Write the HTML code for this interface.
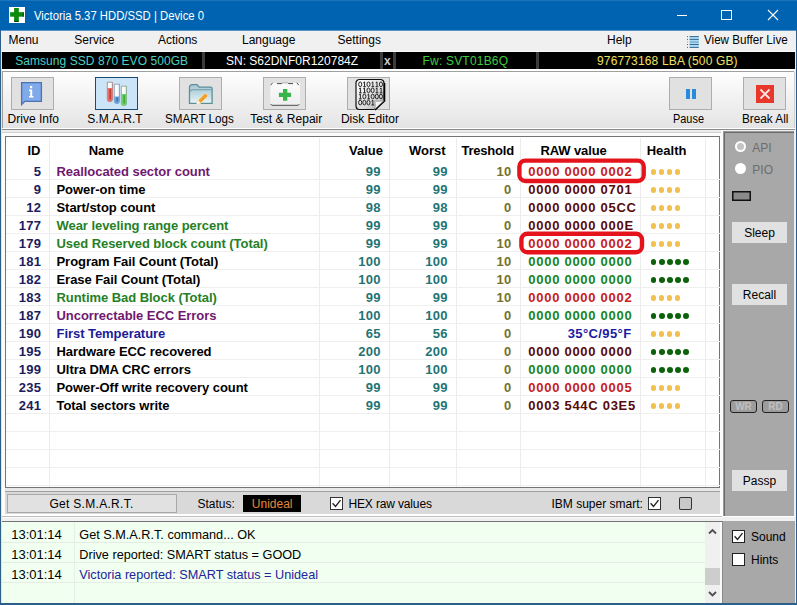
<!DOCTYPE html>
<html><head><meta charset="utf-8"><style>
html,body{margin:0;padding:0;width:797px;height:605px;overflow:hidden;background:#f0f0f0}
#w{position:relative;width:797px;height:605px;overflow:hidden;font-family:"Liberation Sans", sans-serif}
.r{position:absolute}
.t{position:absolute;white-space:pre;font-family:"Liberation Sans", sans-serif}
</style></head><body><div id="w">
<div class="r" style="left:0px;top:0px;width:797px;height:605px;background:#f0f0f0"></div>
<div class="r" style="left:0px;top:0px;width:797px;height:30px;background:#0063b1"></div>
<div class="r" style="left:0px;top:0px;width:797px;height:1px;background:#1a73bd"></div>
<div class="r" style="left:9px;top:7px;width:16px;height:16px;background:#ffffff"></div>
<svg class="r" style="left:9px;top:7px" width="16" height="16" viewBox="0 0 16 16"><g fill="#0b8a0b"><rect x="5.1" y="1" width="4.7" height="13.8"/><rect x="1.1" y="5.2" width="13.6" height="4.5"/></g><rect x="13.7" y="5.2" width="1" height="4.5" fill="#053505"/><rect x="5.1" y="13.8" width="4.7" height="1" fill="#053505"/></svg>
<div class="t" style="left:33.5px;top:9.84px;font-size:12px;line-height:12px;color:#ffffff;font-weight:normal;transform:scaleX(0.943);transform-origin:0 0;">Victoria 5.37 HDD/SSD | Device 0</div>
<svg class="r" style="left:660px;top:0" width="137" height="30" viewBox="0 0 137 30"><path d="M17 15.5h10" stroke="#fff" stroke-width="1"/><rect x="61.5" y="10.5" width="10" height="9" fill="none" stroke="#fff" stroke-width="1"/><path d="M108 10L118 20M118 10L108 20" stroke="#fff" stroke-width="1.1"/></svg>
<div class="r" style="left:1px;top:30px;width:795px;height:22px;background:#f0f0f0"></div>
<div class="r" style="left:1px;top:51px;width:795px;height:1px;background:#fbfbfb"></div>
<div class="r" style="left:0px;top:30px;width:797px;height:1px;background:#5a93c8"></div>
<div class="t" style="left:8.5px;top:33.84px;font-size:12px;line-height:12px;color:#000;font-weight:normal;">Menu</div>
<div class="t" style="left:74.3px;top:33.84px;font-size:12px;line-height:12px;color:#000;font-weight:normal;">Service</div>
<div class="t" style="left:158px;top:33.84px;font-size:12px;line-height:12px;color:#000;font-weight:normal;">Actions</div>
<div class="t" style="left:242px;top:33.84px;font-size:12px;line-height:12px;color:#000;font-weight:normal;">Language</div>
<div class="t" style="left:337.6px;top:33.84px;font-size:12px;line-height:12px;color:#000;font-weight:normal;">Settings</div>
<div class="t" style="left:607px;top:33.84px;font-size:12px;line-height:12px;color:#000;font-weight:normal;">Help</div>
<svg class="r" style="left:680px;top:30px" width="24" height="22" viewBox="0 0 24 22"><rect x="9.6" y="6.3" width="9.2" height="11.5" fill="#a8dcf4"/><g fill="#3a6a90"><rect x="9.6" y="6.1" width="9.2" height="1"/><rect x="9.6" y="8.9" width="9.2" height="1"/><rect x="9.6" y="11.5" width="9.2" height="1" fill="#6a9ab8"/><rect x="9.6" y="14" width="9.2" height="1"/><rect x="9.6" y="16.9" width="9.2" height="1"/><rect x="7" y="6.1" width="1" height="1"/><rect x="7" y="8.9" width="1" height="1"/><rect x="7" y="11.5" width="1" height="1" fill="#8aaac0"/><rect x="7" y="14" width="1" height="1"/><rect x="7" y="16.9" width="1" height="1"/></g></svg>
<div class="t" style="left:704.3px;top:33.84px;font-size:12px;line-height:12px;color:#000;font-weight:normal;transform:scaleX(0.97);transform-origin:0 0;">View Buffer Live</div>
<div class="r" style="left:2px;top:52px;width:793px;height:17px;background:#000"></div>
<div class="r" style="left:202px;top:52px;width:3px;height:17px;background:#3c3c3c"></div>
<div class="r" style="left:380px;top:52px;width:3px;height:17px;background:#3c3c3c"></div>
<div class="r" style="left:393px;top:52px;width:3px;height:17px;background:#3c3c3c"></div>
<div class="r" style="left:536px;top:52px;width:3px;height:17px;background:#3c3c3c"></div>
<div class="t" style="left:15.2px;top:54.84px;font-size:12px;line-height:12px;color:#4fd0c4;font-weight:normal;letter-spacing:0.06px;">Samsung SSD 870 EVO 500GB</div>
<div class="t" style="left:226px;top:54.84px;font-size:12px;line-height:12px;color:#ffffff;font-weight:normal;">SN: S62DNF0R120784Z</div>
<div class="t" style="left:384px;top:54.84px;font-size:12px;line-height:12px;color:#c8c8c8;font-weight:bold;">x</div>
<div class="t" style="left:422.5px;top:54.84px;font-size:12px;line-height:12px;color:#3fcc3f;font-weight:normal;letter-spacing:0.2px;">Fw: SVT01B6Q</div>
<div class="t" style="left:597px;top:54.84px;font-size:12px;line-height:12px;color:#f0e060;font-weight:normal;letter-spacing:0.15px;">976773168 LBA (500 GB)</div>
<div class="r" style="left:2px;top:69px;width:793px;height:2px;background:#ffffff"></div>
<div class="r" style="left:2px;top:71px;width:792px;height:1px;background:#a0a0a0"></div>
<div class="r" style="left:2px;top:72px;width:792px;height:56px;background:linear-gradient(#fefefe,#e4e4e4)"></div>
<div class="r" style="left:2px;top:72px;width:1px;height:56px;background:#a0a0a0"></div>
<div class="r" style="left:794px;top:72px;width:1px;height:56px;background:#d0d0d0"></div>
<div class="r" style="left:2px;top:128px;width:793px;height:1px;background:#ffffff"></div>
<div class="r" style="left:2px;top:129px;width:793px;height:1px;background:#8c8c8c"></div>
<div class="r" style="left:11px;top:77px;width:43px;height:33px;background:#e1e1e1;box-shadow:inset 0 0 0 1px #adadad;"></div>
<div class="r" style="left:179px;top:77px;width:43px;height:33px;background:#e1e1e1;box-shadow:inset 0 0 0 1px #adadad;"></div>
<div class="r" style="left:263px;top:77px;width:43px;height:33px;background:#e1e1e1;box-shadow:inset 0 0 0 1px #adadad;"></div>
<div class="r" style="left:347px;top:77px;width:43px;height:33px;background:#e1e1e1;box-shadow:inset 0 0 0 1px #adadad;"></div>
<div class="r" style="left:669px;top:77px;width:43px;height:33px;background:#e1e1e1;box-shadow:inset 0 0 0 1px #adadad;"></div>
<div class="r" style="left:743px;top:77px;width:43px;height:33px;background:#e1e1e1;box-shadow:inset 0 0 0 1px #adadad;"></div>
<div class="r" style="left:95px;top:77px;width:43px;height:33px;background:#cce4f7;box-shadow:inset 0 0 0 1px #1b4a72;"></div>
<svg class="r" style="left:20px;top:81px" width="24" height="25" viewBox="0 0 24 25"><path d="M1.6 1.6h19.8v18.8H4.8L1.6 23.6z" fill="#80aaea" stroke="#4a72b4" stroke-width="1.3"/><rect x="10" y="5" width="2.2" height="2.2" fill="#fff"/><path d="M9 8.5h3.2v6.5h1.3v1.6H9V15h1.2v-5H9z" fill="#fff"/></svg>
<svg class="r" style="left:105px;top:80px" width="24" height="28" viewBox="0 0 24 28"><defs><linearGradient id="tg" x1="0" x2="1"><stop offset="0" stop-color="#f4f8fb"/><stop offset="0.5" stop-color="#ffffff"/><stop offset="1" stop-color="#d8e2ea"/></linearGradient></defs><path d="M2.3 2.2h5.2v16.9a2.6 2.6 0 0 1 -5.2 0z" fill="url(#tg)" stroke="#a88" stroke-width="0.9"/><path d="M2.3 8h5.2v11.099999999999998a2.6 2.6 0 0 1 -5.2 0z" fill="#e8706a"/><path d="M5.16 9V19.599999999999998" fill="none" stroke="#c0352e" stroke-width="1.4"/><path d="M9.3 4.2h5.2v16.9a2.6 2.6 0 0 1 -5.2 0z" fill="url(#tg)" stroke="#8a9fb8" stroke-width="0.9"/><path d="M9.3 16.5h5.2v4.599999999999998a2.6 2.6 0 0 1 -5.2 0z" fill="#68a4dc"/><path d="M12.16 17.5V21.599999999999998" fill="none" stroke="#2a70b8" stroke-width="1.4"/><path d="M16.3 6.2h5.2v16.9a2.6 2.6 0 0 1 -5.2 0z" fill="url(#tg)" stroke="#8aa88a" stroke-width="0.9"/><path d="M16.3 14h5.2v9.099999999999998a2.6 2.6 0 0 1 -5.2 0z" fill="#6cd06c"/><path d="M19.16 15V23.599999999999998" fill="none" stroke="#3aa43a" stroke-width="1.4"/></svg>
<svg class="r" style="left:188px;top:83px" width="27" height="24" viewBox="0 0 27 24"><defs><linearGradient id="fg" x1="0" y1="0" x2="0" y2="1"><stop offset="0" stop-color="#a6c8d4"/><stop offset="0.45" stop-color="#bcd8e0"/><stop offset="1" stop-color="#eaf6f8"/></linearGradient></defs><path d="M1.5 20.4V4.2q0-2 2-2.6h5.6l2 2.6h11.6q1.4 0 1.4 1.4v14.8z" fill="url(#fg)" stroke="#5d8e9b" stroke-width="1.3"/><path d="M1.8 8.2q2-1.4 4-1.4h17.6" fill="none" stroke="#6d9aa6" stroke-width="1.1"/><path d="M8.5 21.6l1.6-4.4 7.2-7.2 2.9 2.9-7.2 7.2z" fill="#f0a028" stroke="#fde8c0" stroke-width="0.7"/><path d="M8.5 21.6l1.6-4.4 2.8 2.8z" fill="#fdf4e4"/></svg>
<svg class="r" style="left:269px;top:81px" width="32" height="26" viewBox="0 0 32 26"><defs><linearGradient id="bg2" x1="0" y1="0" x2="0" y2="1"><stop offset="0" stop-color="#fbfbfb"/><stop offset="1" stop-color="#eeeeee"/></linearGradient></defs><rect x="1.4" y="2" width="29.6" height="22.6" fill="url(#bg2)"/><path d="M1.6 4.2L3.6 1.8M8 2.6h4.6l0.8-0.8M18.6 1.8l0.8 0.8h4.6M27.8 1.8l2 2.4" fill="none" stroke="#333" stroke-width="0.9"/><path d="M13.4 1.9h5.2" stroke="#b0b0b0" stroke-width="0.9"/><path d="M1.6 23l1.2 1.3h26.4l1.2-1.3" fill="none" stroke="#3a3a3a" stroke-width="0.9"/><path d="M14 8.1h4.3v3.6h3.8v4.3h-3.8v3.7H14V16h-4.1v-4.3H14z" fill="#38b44a"/></svg>
<svg class="r" style="left:355px;top:78px" width="32" height="33" viewBox="0 0 32 33"><defs><linearGradient id="dg" x1="0" y1="0" x2="1" y2="1"><stop offset="0" stop-color="#ffffff"/><stop offset="0.6" stop-color="#dcdcdc"/><stop offset="1" stop-color="#a8a8a8"/></linearGradient></defs><path d="M4.5 1.5h21a3.5 3.5 0 0 1 3.5 3.5v17.5L19.5 31.5H4.5a3.5 3.5 0 0 1-3.5-3.5v-23a3.5 3.5 0 0 1 3.5-3.5z" fill="url(#dg)" stroke="#111" stroke-width="1.2"/><path d="M29.5 5v18L20 32" fill="none" stroke="#000" stroke-width="1.6"/><path d="M29 22.5L19.5 31.5c1.2-3 1-6 0-8.5c3.5 0.6 6.5 0.2 9.5-0.5z" fill="#f4f4f4" stroke="#777" stroke-width="0.6"/><g fill="none" stroke="#1e1e1e" stroke-width="0.95"><ellipse cx="5.20" cy="6.30" rx="1.55" ry="2.35"/><path d="M8.25 4.80L9.55 3.90V8.70M8.15 8.70H10.85"/><ellipse cx="13.50" cy="6.30" rx="1.55" ry="2.35"/><path d="M16.55 4.80L17.85 3.90V8.70M16.45 8.70H19.15"/><path d="M20.70 4.80L22.00 3.90V8.70M20.60 8.70H23.30"/><ellipse cx="25.95" cy="6.30" rx="1.55" ry="2.35"/><path d="M4.10 10.90L5.40 10.00V14.80M4.00 14.80H6.70"/><path d="M8.25 10.90L9.55 10.00V14.80M8.15 14.80H10.85"/><ellipse cx="13.50" cy="12.40" rx="1.55" ry="2.35"/><ellipse cx="17.65" cy="12.40" rx="1.55" ry="2.35"/><path d="M20.70 10.90L22.00 10.00V14.80M20.60 14.80H23.30"/><path d="M24.85 10.90L26.15 10.00V14.80M24.75 14.80H27.45"/><path d="M4.10 17.00L5.40 16.10V20.90M4.00 20.90H6.70"/><ellipse cx="9.35" cy="18.50" rx="1.55" ry="2.35"/><path d="M12.40 17.00L13.70 16.10V20.90M12.30 20.90H15.00"/><ellipse cx="17.65" cy="18.50" rx="1.55" ry="2.35"/><ellipse cx="21.80" cy="18.50" rx="1.55" ry="2.35"/><ellipse cx="25.95" cy="18.50" rx="1.55" ry="2.35"/><ellipse cx="5.20" cy="24.60" rx="1.55" ry="2.35"/><ellipse cx="9.35" cy="24.60" rx="1.55" ry="2.35"/><ellipse cx="13.50" cy="24.60" rx="1.55" ry="2.35"/><path d="M16.55 23.10L17.85 22.20V27.00M16.45 27.00H19.15"/></g></svg>
<div class="r" style="left:686px;top:89px;width:4px;height:10px;background:#2a8bdc"></div>
<div class="r" style="left:692px;top:89px;width:4px;height:10px;background:#2a8bdc"></div>
<div class="r" style="left:756px;top:85px;width:18px;height:18px;background:#e8382c"></div>
<svg class="r" style="left:756px;top:85px" width="18" height="18" viewBox="0 0 18 18"><path d="M4.5 4.5l9 9M13.5 4.5l-9 9" stroke="#ffe8e8" stroke-width="1.8"/></svg>
<div class="t" style="left:7.6px;top:112.84px;font-size:12px;line-height:12px;color:#000;font-weight:normal;transform:scaleX(1);transform-origin:0 0;">Drive Info</div>
<div class="t" style="left:87.3px;top:112.84px;font-size:12px;line-height:12px;color:#000;font-weight:normal;transform:scaleX(1);transform-origin:0 0;">S.M.A.R.T</div>
<div class="t" style="left:165.3px;top:112.84px;font-size:12px;line-height:12px;color:#000;font-weight:normal;transform:scaleX(0.97);transform-origin:0 0;">SMART Logs</div>
<div class="t" style="left:250.2px;top:112.84px;font-size:12px;line-height:12px;color:#000;font-weight:normal;transform:scaleX(1);transform-origin:0 0;">Test &amp; Repair</div>
<div class="t" style="left:340.9px;top:112.84px;font-size:12px;line-height:12px;color:#000;font-weight:normal;transform:scaleX(1);transform-origin:0 0;">Disk Editor</div>
<div class="t" style="left:673.4px;top:112.84px;font-size:12px;line-height:12px;color:#000;font-weight:normal;transform:scaleX(0.91);transform-origin:0 0;">Pause</div>
<div class="t" style="left:741.7px;top:112.84px;font-size:12px;line-height:12px;color:#000;font-weight:normal;transform:scaleX(0.98);transform-origin:0 0;">Break All</div>
<div class="r" style="left:2px;top:130px;width:720px;height:3px;background:#ececec"></div>
<div class="r" style="left:2px;top:132px;width:720px;height:1px;background:#c8c8c8"></div>
<div class="r" style="left:1px;top:130px;width:722px;height:386px;background:#fcfcfc"></div>
<div class="r" style="left:2px;top:130px;width:720px;height:3px;background:#ececec"></div>
<div class="r" style="left:2px;top:132px;width:720px;height:1px;background:#cfcfcf"></div>
<div class="r" style="left:721px;top:130px;width:3px;height:386px;background:#fcfcfc"></div>
<div class="r" style="left:723px;top:131px;width:71px;height:385px;background:#a8a8a8;box-shadow:inset 1px 1px 0 #9a9a9a, inset 2px 2px 0 #6a6a6a"></div>
<div class="r" style="left:5px;top:136px;width:715px;height:352px;background:#ffffff;box-shadow:inset 0 0 0 1px #747474"></div>
<div class="r" style="left:49px;top:138px;width:1px;height:349px;background:#ececec"></div>
<div class="r" style="left:319px;top:138px;width:1px;height:349px;background:#ececec"></div>
<div class="r" style="left:389px;top:138px;width:1px;height:349px;background:#ececec"></div>
<div class="r" style="left:456px;top:138px;width:1px;height:349px;background:#ececec"></div>
<div class="r" style="left:520px;top:138px;width:1px;height:349px;background:#ececec"></div>
<div class="r" style="left:640px;top:138px;width:1px;height:349px;background:#ececec"></div>
<div class="r" style="left:705px;top:138px;width:1px;height:349px;background:#ececec"></div>
<div class="r" style="left:6px;top:179px;width:714px;height:1px;background:#efefef"></div>
<div class="r" style="left:6px;top:197px;width:714px;height:1px;background:#efefef"></div>
<div class="r" style="left:6px;top:215px;width:714px;height:1px;background:#efefef"></div>
<div class="r" style="left:6px;top:233px;width:714px;height:1px;background:#efefef"></div>
<div class="r" style="left:6px;top:251px;width:714px;height:1px;background:#efefef"></div>
<div class="r" style="left:6px;top:269px;width:714px;height:1px;background:#efefef"></div>
<div class="r" style="left:6px;top:287px;width:714px;height:1px;background:#efefef"></div>
<div class="r" style="left:6px;top:305px;width:714px;height:1px;background:#efefef"></div>
<div class="r" style="left:6px;top:323px;width:714px;height:1px;background:#efefef"></div>
<div class="r" style="left:6px;top:341px;width:714px;height:1px;background:#efefef"></div>
<div class="r" style="left:6px;top:359px;width:714px;height:1px;background:#efefef"></div>
<div class="r" style="left:6px;top:377px;width:714px;height:1px;background:#efefef"></div>
<div class="r" style="left:6px;top:395px;width:714px;height:1px;background:#efefef"></div>
<div class="r" style="left:6px;top:413px;width:714px;height:1px;background:#efefef"></div>
<div class="r" style="left:6px;top:431px;width:714px;height:1px;background:#efefef"></div>
<div class="r" style="left:6px;top:449px;width:714px;height:1px;background:#efefef"></div>
<div class="r" style="left:6px;top:467px;width:714px;height:1px;background:#efefef"></div>
<div class="r" style="left:6px;top:485px;width:714px;height:1px;background:#efefef"></div>
<div class="t" style="right:756.5px;top:144.0px;font-size:13px;line-height:13px;color:#000;font-weight:bold;">ID</div>
<div class="t" style="left:88.7px;top:144.0px;font-size:13px;line-height:13px;color:#000;font-weight:bold;">Name</div>
<div class="t" style="right:414px;top:144.0px;font-size:13px;line-height:13px;color:#000;font-weight:bold;">Value</div>
<div class="t" style="right:351.4px;top:144.0px;font-size:13px;line-height:13px;color:#000;font-weight:bold;">Worst</div>
<div class="t" style="right:283px;top:144.0px;font-size:13px;line-height:13px;color:#000;font-weight:bold;letter-spacing:-0.2px;">Treshold</div>
<div class="t" style="left:540.4px;top:144.0px;font-size:13px;line-height:13px;color:#000;font-weight:bold;letter-spacing:-0.1px;">RAW value</div>
<div class="t" style="left:646.7px;top:144.0px;font-size:13px;line-height:13px;color:#000;font-weight:bold;">Health</div>
<div class="t" style="right:755.7px;top:165.0px;font-size:13px;line-height:13px;color:#1c1c5e;font-weight:bold;letter-spacing:0.3px;">5</div>
<div class="t" style="left:56.5px;top:165.0px;font-size:13px;line-height:13px;color:#701870;font-weight:bold;letter-spacing:-0.05px;">Reallocated sector count</div>
<div class="t" style="right:416.2px;top:165.0px;font-size:13px;line-height:13px;color:#1f7474;font-weight:bold;letter-spacing:0.3px;">99</div>
<div class="t" style="right:349.2px;top:165.0px;font-size:13px;line-height:13px;color:#1f7474;font-weight:bold;letter-spacing:0.3px;">99</div>
<div class="t" style="right:285.4px;top:165.0px;font-size:13px;line-height:13px;color:#76722a;font-weight:bold;letter-spacing:0.3px;">10</div>
<div class="t" style="left:528.3px;top:165.0px;font-size:13px;line-height:13px;color:#c42020;font-weight:bold;letter-spacing:0.72px;">0000 0000 0002</div>
<div class="r" style="left:650.8px;top:169.2px;width:5.6px;height:5.6px;background:#f2c04c;border-radius:50%"></div>
<div class="r" style="left:658.8px;top:169.2px;width:5.6px;height:5.6px;background:#f2c04c;border-radius:50%"></div>
<div class="r" style="left:666.8px;top:169.2px;width:5.6px;height:5.6px;background:#f2c04c;border-radius:50%"></div>
<div class="r" style="left:674.8px;top:169.2px;width:5.6px;height:5.6px;background:#f2c04c;border-radius:50%"></div>
<div class="t" style="right:755.7px;top:183.0px;font-size:13px;line-height:13px;color:#1c1c5e;font-weight:bold;letter-spacing:0.3px;">9</div>
<div class="t" style="left:56.5px;top:183.0px;font-size:13px;line-height:13px;color:#000;font-weight:bold;letter-spacing:-0.05px;">Power-on time</div>
<div class="t" style="right:416.2px;top:183.0px;font-size:13px;line-height:13px;color:#1f7474;font-weight:bold;letter-spacing:0.3px;">99</div>
<div class="t" style="right:349.2px;top:183.0px;font-size:13px;line-height:13px;color:#1f7474;font-weight:bold;letter-spacing:0.3px;">99</div>
<div class="t" style="right:285.4px;top:183.0px;font-size:13px;line-height:13px;color:#76722a;font-weight:bold;letter-spacing:0.3px;">0</div>
<div class="t" style="left:528.3px;top:183.0px;font-size:13px;line-height:13px;color:#560a0a;font-weight:bold;letter-spacing:0.72px;">0000 0000 0701</div>
<div class="r" style="left:650.8px;top:187.2px;width:5.6px;height:5.6px;background:#f2c04c;border-radius:50%"></div>
<div class="r" style="left:658.8px;top:187.2px;width:5.6px;height:5.6px;background:#f2c04c;border-radius:50%"></div>
<div class="r" style="left:666.8px;top:187.2px;width:5.6px;height:5.6px;background:#f2c04c;border-radius:50%"></div>
<div class="r" style="left:674.8px;top:187.2px;width:5.6px;height:5.6px;background:#f2c04c;border-radius:50%"></div>
<div class="t" style="right:755.7px;top:201.0px;font-size:13px;line-height:13px;color:#1c1c5e;font-weight:bold;letter-spacing:0.3px;">12</div>
<div class="t" style="left:56.5px;top:201.0px;font-size:13px;line-height:13px;color:#000;font-weight:bold;letter-spacing:-0.05px;">Start/stop count</div>
<div class="t" style="right:416.2px;top:201.0px;font-size:13px;line-height:13px;color:#1f7474;font-weight:bold;letter-spacing:0.3px;">98</div>
<div class="t" style="right:349.2px;top:201.0px;font-size:13px;line-height:13px;color:#1f7474;font-weight:bold;letter-spacing:0.3px;">98</div>
<div class="t" style="right:285.4px;top:201.0px;font-size:13px;line-height:13px;color:#76722a;font-weight:bold;letter-spacing:0.3px;">0</div>
<div class="t" style="left:528.3px;top:201.0px;font-size:13px;line-height:13px;color:#560a0a;font-weight:bold;letter-spacing:0.72px;">0000 0000 05CC</div>
<div class="r" style="left:650.8px;top:205.2px;width:5.6px;height:5.6px;background:#f2c04c;border-radius:50%"></div>
<div class="r" style="left:658.8px;top:205.2px;width:5.6px;height:5.6px;background:#f2c04c;border-radius:50%"></div>
<div class="r" style="left:666.8px;top:205.2px;width:5.6px;height:5.6px;background:#f2c04c;border-radius:50%"></div>
<div class="r" style="left:674.8px;top:205.2px;width:5.6px;height:5.6px;background:#f2c04c;border-radius:50%"></div>
<div class="t" style="right:755.7px;top:219.0px;font-size:13px;line-height:13px;color:#1c1c5e;font-weight:bold;letter-spacing:0.3px;">177</div>
<div class="t" style="left:56.5px;top:219.0px;font-size:13px;line-height:13px;color:#267f26;font-weight:bold;letter-spacing:-0.05px;">Wear leveling range percent</div>
<div class="t" style="right:416.2px;top:219.0px;font-size:13px;line-height:13px;color:#1f7474;font-weight:bold;letter-spacing:0.3px;">99</div>
<div class="t" style="right:349.2px;top:219.0px;font-size:13px;line-height:13px;color:#1f7474;font-weight:bold;letter-spacing:0.3px;">99</div>
<div class="t" style="right:285.4px;top:219.0px;font-size:13px;line-height:13px;color:#76722a;font-weight:bold;letter-spacing:0.3px;">0</div>
<div class="t" style="left:528.3px;top:219.0px;font-size:13px;line-height:13px;color:#560a0a;font-weight:bold;letter-spacing:0.72px;">0000 0000 000E</div>
<div class="r" style="left:650.8px;top:223.2px;width:5.6px;height:5.6px;background:#f2c04c;border-radius:50%"></div>
<div class="r" style="left:658.8px;top:223.2px;width:5.6px;height:5.6px;background:#f2c04c;border-radius:50%"></div>
<div class="r" style="left:666.8px;top:223.2px;width:5.6px;height:5.6px;background:#f2c04c;border-radius:50%"></div>
<div class="r" style="left:674.8px;top:223.2px;width:5.6px;height:5.6px;background:#f2c04c;border-radius:50%"></div>
<div class="t" style="right:755.7px;top:237.0px;font-size:13px;line-height:13px;color:#1c1c5e;font-weight:bold;letter-spacing:0.3px;">179</div>
<div class="t" style="left:56.5px;top:237.0px;font-size:13px;line-height:13px;color:#267f26;font-weight:bold;letter-spacing:-0.05px;">Used Reserved block count (Total)</div>
<div class="t" style="right:416.2px;top:237.0px;font-size:13px;line-height:13px;color:#1f7474;font-weight:bold;letter-spacing:0.3px;">99</div>
<div class="t" style="right:349.2px;top:237.0px;font-size:13px;line-height:13px;color:#1f7474;font-weight:bold;letter-spacing:0.3px;">99</div>
<div class="t" style="right:285.4px;top:237.0px;font-size:13px;line-height:13px;color:#76722a;font-weight:bold;letter-spacing:0.3px;">10</div>
<div class="t" style="left:528.3px;top:237.0px;font-size:13px;line-height:13px;color:#c42020;font-weight:bold;letter-spacing:0.72px;">0000 0000 0002</div>
<div class="r" style="left:650.8px;top:241.2px;width:5.6px;height:5.6px;background:#f2c04c;border-radius:50%"></div>
<div class="r" style="left:658.8px;top:241.2px;width:5.6px;height:5.6px;background:#f2c04c;border-radius:50%"></div>
<div class="r" style="left:666.8px;top:241.2px;width:5.6px;height:5.6px;background:#f2c04c;border-radius:50%"></div>
<div class="r" style="left:674.8px;top:241.2px;width:5.6px;height:5.6px;background:#f2c04c;border-radius:50%"></div>
<div class="t" style="right:755.7px;top:255.0px;font-size:13px;line-height:13px;color:#1c1c5e;font-weight:bold;letter-spacing:0.3px;">181</div>
<div class="t" style="left:56.5px;top:255.0px;font-size:13px;line-height:13px;color:#000;font-weight:bold;letter-spacing:-0.05px;">Program Fail Count (Total)</div>
<div class="t" style="right:416.2px;top:255.0px;font-size:13px;line-height:13px;color:#1f7474;font-weight:bold;letter-spacing:0.3px;">100</div>
<div class="t" style="right:349.2px;top:255.0px;font-size:13px;line-height:13px;color:#1f7474;font-weight:bold;letter-spacing:0.3px;">100</div>
<div class="t" style="right:285.4px;top:255.0px;font-size:13px;line-height:13px;color:#76722a;font-weight:bold;letter-spacing:0.3px;">10</div>
<div class="t" style="left:528.3px;top:255.0px;font-size:13px;line-height:13px;color:#188418;font-weight:bold;letter-spacing:0.72px;">0000 0000 0000</div>
<div class="r" style="left:650.7px;top:259.2px;width:5.8px;height:5.8px;background:#0b620b;border-radius:50%"></div>
<div class="r" style="left:658.8000000000001px;top:259.2px;width:5.8px;height:5.8px;background:#0b620b;border-radius:50%"></div>
<div class="r" style="left:666.9000000000001px;top:259.2px;width:5.8px;height:5.8px;background:#0b620b;border-radius:50%"></div>
<div class="r" style="left:675.0px;top:259.2px;width:5.8px;height:5.8px;background:#0b620b;border-radius:50%"></div>
<div class="r" style="left:683.1px;top:259.2px;width:5.8px;height:5.8px;background:#0b620b;border-radius:50%"></div>
<div class="t" style="right:755.7px;top:273.0px;font-size:13px;line-height:13px;color:#1c1c5e;font-weight:bold;letter-spacing:0.3px;">182</div>
<div class="t" style="left:56.5px;top:273.0px;font-size:13px;line-height:13px;color:#000;font-weight:bold;letter-spacing:-0.05px;">Erase Fail Count (Total)</div>
<div class="t" style="right:416.2px;top:273.0px;font-size:13px;line-height:13px;color:#1f7474;font-weight:bold;letter-spacing:0.3px;">100</div>
<div class="t" style="right:349.2px;top:273.0px;font-size:13px;line-height:13px;color:#1f7474;font-weight:bold;letter-spacing:0.3px;">100</div>
<div class="t" style="right:285.4px;top:273.0px;font-size:13px;line-height:13px;color:#76722a;font-weight:bold;letter-spacing:0.3px;">10</div>
<div class="t" style="left:528.3px;top:273.0px;font-size:13px;line-height:13px;color:#188418;font-weight:bold;letter-spacing:0.72px;">0000 0000 0000</div>
<div class="r" style="left:650.7px;top:277.2px;width:5.8px;height:5.8px;background:#0b620b;border-radius:50%"></div>
<div class="r" style="left:658.8000000000001px;top:277.2px;width:5.8px;height:5.8px;background:#0b620b;border-radius:50%"></div>
<div class="r" style="left:666.9000000000001px;top:277.2px;width:5.8px;height:5.8px;background:#0b620b;border-radius:50%"></div>
<div class="r" style="left:675.0px;top:277.2px;width:5.8px;height:5.8px;background:#0b620b;border-radius:50%"></div>
<div class="r" style="left:683.1px;top:277.2px;width:5.8px;height:5.8px;background:#0b620b;border-radius:50%"></div>
<div class="t" style="right:755.7px;top:291.0px;font-size:13px;line-height:13px;color:#1c1c5e;font-weight:bold;letter-spacing:0.3px;">183</div>
<div class="t" style="left:56.5px;top:291.0px;font-size:13px;line-height:13px;color:#267f26;font-weight:bold;letter-spacing:-0.05px;">Runtime Bad Block (Total)</div>
<div class="t" style="right:416.2px;top:291.0px;font-size:13px;line-height:13px;color:#1f7474;font-weight:bold;letter-spacing:0.3px;">99</div>
<div class="t" style="right:349.2px;top:291.0px;font-size:13px;line-height:13px;color:#1f7474;font-weight:bold;letter-spacing:0.3px;">99</div>
<div class="t" style="right:285.4px;top:291.0px;font-size:13px;line-height:13px;color:#76722a;font-weight:bold;letter-spacing:0.3px;">10</div>
<div class="t" style="left:528.3px;top:291.0px;font-size:13px;line-height:13px;color:#c42020;font-weight:bold;letter-spacing:0.72px;">0000 0000 0002</div>
<div class="r" style="left:650.8px;top:295.2px;width:5.6px;height:5.6px;background:#f2c04c;border-radius:50%"></div>
<div class="r" style="left:658.8px;top:295.2px;width:5.6px;height:5.6px;background:#f2c04c;border-radius:50%"></div>
<div class="r" style="left:666.8px;top:295.2px;width:5.6px;height:5.6px;background:#f2c04c;border-radius:50%"></div>
<div class="r" style="left:674.8px;top:295.2px;width:5.6px;height:5.6px;background:#f2c04c;border-radius:50%"></div>
<div class="t" style="right:755.7px;top:309.0px;font-size:13px;line-height:13px;color:#1c1c5e;font-weight:bold;letter-spacing:0.3px;">187</div>
<div class="t" style="left:56.5px;top:309.0px;font-size:13px;line-height:13px;color:#701870;font-weight:bold;letter-spacing:-0.05px;">Uncorrectable ECC Errors</div>
<div class="t" style="right:416.2px;top:309.0px;font-size:13px;line-height:13px;color:#1f7474;font-weight:bold;letter-spacing:0.3px;">100</div>
<div class="t" style="right:349.2px;top:309.0px;font-size:13px;line-height:13px;color:#1f7474;font-weight:bold;letter-spacing:0.3px;">100</div>
<div class="t" style="right:285.4px;top:309.0px;font-size:13px;line-height:13px;color:#76722a;font-weight:bold;letter-spacing:0.3px;">0</div>
<div class="t" style="left:528.3px;top:309.0px;font-size:13px;line-height:13px;color:#188418;font-weight:bold;letter-spacing:0.72px;">0000 0000 0000</div>
<div class="r" style="left:650.7px;top:313.2px;width:5.8px;height:5.8px;background:#0b620b;border-radius:50%"></div>
<div class="r" style="left:658.8000000000001px;top:313.2px;width:5.8px;height:5.8px;background:#0b620b;border-radius:50%"></div>
<div class="r" style="left:666.9000000000001px;top:313.2px;width:5.8px;height:5.8px;background:#0b620b;border-radius:50%"></div>
<div class="r" style="left:675.0px;top:313.2px;width:5.8px;height:5.8px;background:#0b620b;border-radius:50%"></div>
<div class="r" style="left:683.1px;top:313.2px;width:5.8px;height:5.8px;background:#0b620b;border-radius:50%"></div>
<div class="t" style="right:755.7px;top:327.0px;font-size:13px;line-height:13px;color:#1c1c5e;font-weight:bold;letter-spacing:0.3px;">190</div>
<div class="t" style="left:56.5px;top:327.0px;font-size:13px;line-height:13px;color:#1c1c96;font-weight:bold;letter-spacing:-0.05px;">First Temperature</div>
<div class="t" style="right:416.2px;top:327.0px;font-size:13px;line-height:13px;color:#1f7474;font-weight:bold;letter-spacing:0.3px;">65</div>
<div class="t" style="right:349.2px;top:327.0px;font-size:13px;line-height:13px;color:#1f7474;font-weight:bold;letter-spacing:0.3px;">56</div>
<div class="t" style="right:285.4px;top:327.0px;font-size:13px;line-height:13px;color:#76722a;font-weight:bold;letter-spacing:0.3px;">0</div>
<div class="t" style="right:165.5px;top:327.0px;font-size:13px;line-height:13px;color:#1a1aa4;font-weight:bold;letter-spacing:0.4px;">35°C/95°F</div>
<div class="r" style="left:650.8px;top:331.2px;width:5.6px;height:5.6px;background:#f2c04c;border-radius:50%"></div>
<div class="r" style="left:658.8px;top:331.2px;width:5.6px;height:5.6px;background:#f2c04c;border-radius:50%"></div>
<div class="r" style="left:666.8px;top:331.2px;width:5.6px;height:5.6px;background:#f2c04c;border-radius:50%"></div>
<div class="r" style="left:674.8px;top:331.2px;width:5.6px;height:5.6px;background:#f2c04c;border-radius:50%"></div>
<div class="t" style="right:755.7px;top:345.0px;font-size:13px;line-height:13px;color:#1c1c5e;font-weight:bold;letter-spacing:0.3px;">195</div>
<div class="t" style="left:56.5px;top:345.0px;font-size:13px;line-height:13px;color:#000;font-weight:bold;letter-spacing:-0.05px;">Hardware ECC recovered</div>
<div class="t" style="right:416.2px;top:345.0px;font-size:13px;line-height:13px;color:#1f7474;font-weight:bold;letter-spacing:0.3px;">200</div>
<div class="t" style="right:349.2px;top:345.0px;font-size:13px;line-height:13px;color:#1f7474;font-weight:bold;letter-spacing:0.3px;">200</div>
<div class="t" style="right:285.4px;top:345.0px;font-size:13px;line-height:13px;color:#76722a;font-weight:bold;letter-spacing:0.3px;">0</div>
<div class="t" style="left:528.3px;top:345.0px;font-size:13px;line-height:13px;color:#560a0a;font-weight:bold;letter-spacing:0.72px;">0000 0000 0000</div>
<div class="r" style="left:650.7px;top:349.2px;width:5.8px;height:5.8px;background:#0b620b;border-radius:50%"></div>
<div class="r" style="left:658.8000000000001px;top:349.2px;width:5.8px;height:5.8px;background:#0b620b;border-radius:50%"></div>
<div class="r" style="left:666.9000000000001px;top:349.2px;width:5.8px;height:5.8px;background:#0b620b;border-radius:50%"></div>
<div class="r" style="left:675.0px;top:349.2px;width:5.8px;height:5.8px;background:#0b620b;border-radius:50%"></div>
<div class="r" style="left:683.1px;top:349.2px;width:5.8px;height:5.8px;background:#0b620b;border-radius:50%"></div>
<div class="t" style="right:755.7px;top:363.0px;font-size:13px;line-height:13px;color:#1c1c5e;font-weight:bold;letter-spacing:0.3px;">199</div>
<div class="t" style="left:56.5px;top:363.0px;font-size:13px;line-height:13px;color:#000;font-weight:bold;letter-spacing:-0.05px;">Ultra DMA CRC errors</div>
<div class="t" style="right:416.2px;top:363.0px;font-size:13px;line-height:13px;color:#1f7474;font-weight:bold;letter-spacing:0.3px;">100</div>
<div class="t" style="right:349.2px;top:363.0px;font-size:13px;line-height:13px;color:#1f7474;font-weight:bold;letter-spacing:0.3px;">100</div>
<div class="t" style="right:285.4px;top:363.0px;font-size:13px;line-height:13px;color:#76722a;font-weight:bold;letter-spacing:0.3px;">0</div>
<div class="t" style="left:528.3px;top:363.0px;font-size:13px;line-height:13px;color:#188418;font-weight:bold;letter-spacing:0.72px;">0000 0000 0000</div>
<div class="r" style="left:650.7px;top:367.2px;width:5.8px;height:5.8px;background:#0b620b;border-radius:50%"></div>
<div class="r" style="left:658.8000000000001px;top:367.2px;width:5.8px;height:5.8px;background:#0b620b;border-radius:50%"></div>
<div class="r" style="left:666.9000000000001px;top:367.2px;width:5.8px;height:5.8px;background:#0b620b;border-radius:50%"></div>
<div class="r" style="left:675.0px;top:367.2px;width:5.8px;height:5.8px;background:#0b620b;border-radius:50%"></div>
<div class="r" style="left:683.1px;top:367.2px;width:5.8px;height:5.8px;background:#0b620b;border-radius:50%"></div>
<div class="t" style="right:755.7px;top:381.0px;font-size:13px;line-height:13px;color:#1c1c5e;font-weight:bold;letter-spacing:0.3px;">235</div>
<div class="t" style="left:56.5px;top:381.0px;font-size:13px;line-height:13px;color:#000;font-weight:bold;letter-spacing:-0.05px;">Power-Off write recovery count</div>
<div class="t" style="right:416.2px;top:381.0px;font-size:13px;line-height:13px;color:#1f7474;font-weight:bold;letter-spacing:0.3px;">99</div>
<div class="t" style="right:349.2px;top:381.0px;font-size:13px;line-height:13px;color:#1f7474;font-weight:bold;letter-spacing:0.3px;">99</div>
<div class="t" style="right:285.4px;top:381.0px;font-size:13px;line-height:13px;color:#76722a;font-weight:bold;letter-spacing:0.3px;">0</div>
<div class="t" style="left:528.3px;top:381.0px;font-size:13px;line-height:13px;color:#c42020;font-weight:bold;letter-spacing:0.72px;">0000 0000 0005</div>
<div class="r" style="left:650.8px;top:385.2px;width:5.6px;height:5.6px;background:#f2c04c;border-radius:50%"></div>
<div class="r" style="left:658.8px;top:385.2px;width:5.6px;height:5.6px;background:#f2c04c;border-radius:50%"></div>
<div class="r" style="left:666.8px;top:385.2px;width:5.6px;height:5.6px;background:#f2c04c;border-radius:50%"></div>
<div class="r" style="left:674.8px;top:385.2px;width:5.6px;height:5.6px;background:#f2c04c;border-radius:50%"></div>
<div class="t" style="right:755.7px;top:399.0px;font-size:13px;line-height:13px;color:#1c1c5e;font-weight:bold;letter-spacing:0.3px;">241</div>
<div class="t" style="left:56.5px;top:399.0px;font-size:13px;line-height:13px;color:#000;font-weight:bold;letter-spacing:-0.05px;">Total sectors write</div>
<div class="t" style="right:416.2px;top:399.0px;font-size:13px;line-height:13px;color:#1f7474;font-weight:bold;letter-spacing:0.3px;">99</div>
<div class="t" style="right:349.2px;top:399.0px;font-size:13px;line-height:13px;color:#1f7474;font-weight:bold;letter-spacing:0.3px;">99</div>
<div class="t" style="right:285.4px;top:399.0px;font-size:13px;line-height:13px;color:#76722a;font-weight:bold;letter-spacing:0.3px;">0</div>
<div class="t" style="left:528.3px;top:399.0px;font-size:13px;line-height:13px;color:#560a0a;font-weight:bold;letter-spacing:0.72px;">0003 544C 03E5</div>
<div class="r" style="left:650.8px;top:403.2px;width:5.6px;height:5.6px;background:#f2c04c;border-radius:50%"></div>
<div class="r" style="left:658.8px;top:403.2px;width:5.6px;height:5.6px;background:#f2c04c;border-radius:50%"></div>
<div class="r" style="left:666.8px;top:403.2px;width:5.6px;height:5.6px;background:#f2c04c;border-radius:50%"></div>
<div class="r" style="left:674.8px;top:403.2px;width:5.6px;height:5.6px;background:#f2c04c;border-radius:50%"></div>
<svg class="r" style="left:0;top:0" width="797" height="605"><rect x="519.4000000000001" y="160.6" width="124.29999999999993" height="20.399999999999984" rx="6" ry="6" fill="none" stroke="#e5141c" stroke-width="4.4"/></svg>
<svg class="r" style="left:0;top:0" width="797" height="605"><rect x="521.4000000000001" y="233.7" width="120.6" height="18.6" rx="6" ry="6" fill="none" stroke="#e5141c" stroke-width="4.4"/></svg>
<div class="r" style="left:5px;top:488px;width:715px;height:3px;background:#e8e8e8"></div>
<div class="r" style="left:5px;top:487px;width:715px;height:1px;background:#747474"></div>
<div class="r" style="left:5px;top:491px;width:715px;height:1px;background:#a0a0a0"></div>
<div class="r" style="left:5px;top:492px;width:715px;height:22px;background:#d9d9d9"></div>
<div class="r" style="left:720px;top:491px;width:1px;height:25px;background:#ffffff"></div>
<div class="r" style="left:2px;top:514px;width:720px;height:2px;background:#ffffff"></div>
<div class="r" style="left:7px;top:494px;width:170px;height:18.5px;background:#e1e1e1;box-shadow:inset 0 0 0 1px #a8a8a8;"></div>
<div class="t" style="left:49.4px;top:498.23999999999995px;font-size:12px;line-height:12px;color:#000;font-weight:normal;letter-spacing:0.3px;">Get S.M.A.R.T.</div>
<div class="t" style="left:197.4px;top:498.23999999999995px;font-size:12px;line-height:12px;color:#000;font-weight:normal;">Status:</div>
<div class="r" style="left:243px;top:495px;width:58px;height:17px;background:#000"></div>
<div class="t" style="left:251.8px;top:498.23999999999995px;font-size:12px;line-height:12px;color:#e8883a;font-weight:normal;">Unideal</div>
<div class="r" style="left:330px;top:497px;width:13px;height:13px;background:#ffffff;box-shadow:inset 0 0 0 1px #333"></div>
<svg class="r" style="left:330px;top:497px" width="13" height="13" viewBox="0 0 13 13"><path d="M2.6 6.3l2.9 3.2 5-6.3" fill="none" stroke="#222" stroke-width="1.35"/></svg>
<div class="t" style="left:348.5px;top:498.23999999999995px;font-size:12px;line-height:12px;color:#000;font-weight:normal;letter-spacing:-0.15px;">HEX raw values</div>
<div class="t" style="left:551.5px;top:498.23999999999995px;font-size:12px;line-height:12px;color:#000;font-weight:normal;">IBM super smart:</div>
<div class="r" style="left:648px;top:497px;width:13px;height:13px;background:#ffffff;box-shadow:inset 0 0 0 1px #333"></div>
<svg class="r" style="left:648px;top:497px" width="13" height="13" viewBox="0 0 13 13"><path d="M2.6 6.3l2.9 3.2 5-6.3" fill="none" stroke="#222" stroke-width="1.35"/></svg>
<div class="r" style="left:679px;top:497px;width:13px;height:13px;background:#c8c8c8;box-shadow:inset 0 0 0 1px #333;border-radius:2px"></div>
<div class="r" style="left:2px;top:516px;width:720px;height:1px;background:#bebebe"></div>
<div class="r" style="left:722px;top:516px;width:73px;height:2px;background:#ffffff"></div>
<div class="r" style="left:2px;top:517px;width:793px;height:4px;background:#f0f0f0"></div>
<div class="r" style="left:2px;top:517px;width:720px;height:1px;background:#fafafa"></div>
<div class="r" style="left:2px;top:521px;width:720px;height:1px;background:#747474"></div>
<div class="r" style="left:2px;top:522px;width:703px;height:81px;background:#f0fff0"></div>
<div class="r" style="left:74px;top:522px;width:1px;height:81px;background:#e6efe6"></div>
<div class="r" style="left:2px;top:542px;width:703px;height:1px;background:#e4ece4"></div>
<div class="r" style="left:2px;top:562px;width:703px;height:1px;background:#e4ece4"></div>
<div class="r" style="left:2px;top:582px;width:703px;height:1px;background:#e4ece4"></div>
<div class="t" style="left:11.2px;top:527.5px;font-size:13px;line-height:13px;color:#000;font-weight:normal;">13:01:14</div>
<div class="t" style="left:79.3px;top:528.65px;font-size:12.7px;line-height:12.7px;color:#000;font-weight:normal;">Get S.M.A.R.T. command... OK</div>
<div class="t" style="left:11.2px;top:547.5px;font-size:13px;line-height:13px;color:#000;font-weight:normal;">13:01:14</div>
<div class="t" style="left:79.3px;top:548.65px;font-size:12.7px;line-height:12.7px;color:#000;font-weight:normal;">Drive reported: SMART status = GOOD</div>
<div class="t" style="left:11.2px;top:567.5px;font-size:13px;line-height:13px;color:#000;font-weight:normal;">13:01:14</div>
<div class="t" style="left:79.3px;top:568.65px;font-size:12.7px;line-height:12.7px;color:#24249a;font-weight:normal;">Victoria reported: SMART status = Unideal</div>
<div class="r" style="left:705px;top:522px;width:17px;height:81px;background:#fafafa"></div>
<div class="r" style="left:705px;top:522px;width:15px;height:81px;background:#f0f0f0"></div>
<div class="r" style="left:705px;top:568px;width:15px;height:17px;background:#cdcdcd"></div>
<svg class="r" style="left:705px;top:521px" width="17" height="82" viewBox="0 0 17 82"><path d="M4 12.5l3.5-3.5 3.5 3.5" fill="none" stroke="#505050" stroke-width="1.9"/><path d="M4 71l3.5 3.5 3.5-3.5" fill="none" stroke="#505050" stroke-width="1.9"/></svg>
<div class="r" style="left:722px;top:521px;width:73px;height:82px;background:#a8a8a8;box-shadow:inset 1px 0 0 #8a8a8a"></div>
<div class="r" style="left:732px;top:530px;width:13px;height:13px;background:#ffffff;box-shadow:inset 0 0 0 1px #222"></div>
<svg class="r" style="left:732px;top:530px" width="13" height="13" viewBox="0 0 13 13"><path d="M2.6 6.3l2.9 3.2 5-6.3" fill="none" stroke="#222" stroke-width="1.35"/></svg>
<div class="t" style="left:751px;top:530.84px;font-size:12px;line-height:12px;color:#000;font-weight:normal;">Sound</div>
<div class="r" style="left:732px;top:553px;width:13px;height:13px;background:#ffffff;box-shadow:inset 0 0 0 1px #222"></div>
<div class="t" style="left:751px;top:553.84px;font-size:12px;line-height:12px;color:#000;font-weight:normal;">Hints</div>
<div class="r" style="left:734.6px;top:140.6px;width:11.8px;height:11.8px;background:#fff;border-radius:50%"></div>
<div class="r" style="left:737px;top:143px;width:7px;height:7px;background:#c4c4c4;border-radius:50%"></div>
<div class="r" style="left:734.6px;top:162.6px;width:11.8px;height:11.8px;background:#fff;border-radius:50%"></div>
<div class="t" style="left:752.3px;top:141.84px;font-size:12px;line-height:12px;color:#6d6d6d;font-weight:normal;">API</div>
<div class="t" style="left:752.3px;top:163.84px;font-size:12px;line-height:12px;color:#6d6d6d;font-weight:normal;">PIO</div>
<div class="r" style="left:732px;top:191px;width:19px;height:10px;background:#8a8a8a;box-shadow:inset 0 0 0 1.5px #111"></div>
<div class="r" style="left:732px;top:222px;width:55px;height:20.5px;background:#e1e1e1"></div>
<div class="t" style="left:759.5px;transform:translateX(-50%);top:226.84px;font-size:12px;line-height:12px;color:#000;font-weight:normal;">Sleep</div>
<div class="r" style="left:732px;top:284px;width:55px;height:20.5px;background:#e1e1e1"></div>
<div class="t" style="left:759.5px;transform:translateX(-50%);top:288.84px;font-size:12px;line-height:12px;color:#000;font-weight:normal;">Recall</div>
<div class="r" style="left:732px;top:470px;width:55px;height:20.5px;background:#e1e1e1"></div>
<div class="t" style="left:759.5px;transform:translateX(-50%);top:474.84px;font-size:12px;line-height:12px;color:#000;font-weight:normal;">Passp</div>
<div class="r" style="left:730px;top:400px;width:27px;height:12.5px;background:#9c9c9c;border:1.5px solid #222;border-radius:3px;box-sizing:border-box"></div>
<div class="t" style="left:743.5px;transform:translateX(-50%);top:401.54px;font-size:10px;line-height:10px;color:#c0c0c0;font-weight:bold;">WR</div>
<div class="r" style="left:762px;top:400px;width:27px;height:12.5px;background:#9c9c9c;border:1.5px solid #222;border-radius:3px;box-sizing:border-box"></div>
<div class="t" style="left:775.5px;transform:translateX(-50%);top:401.54px;font-size:10px;line-height:10px;color:#c0c0c0;font-weight:bold;">RD</div>
<div class="r" style="left:0px;top:30px;width:1px;height:575px;background:#2d5f8a"></div>
<div class="r" style="left:1px;top:52px;width:1px;height:551px;background:#d4eaf8"></div>
<div class="r" style="left:796px;top:30px;width:1px;height:575px;background:#2d5f8a"></div>
<div class="r" style="left:0px;top:603px;width:797px;height:2px;background:#2d5f8a"></div>
</div></body></html>
